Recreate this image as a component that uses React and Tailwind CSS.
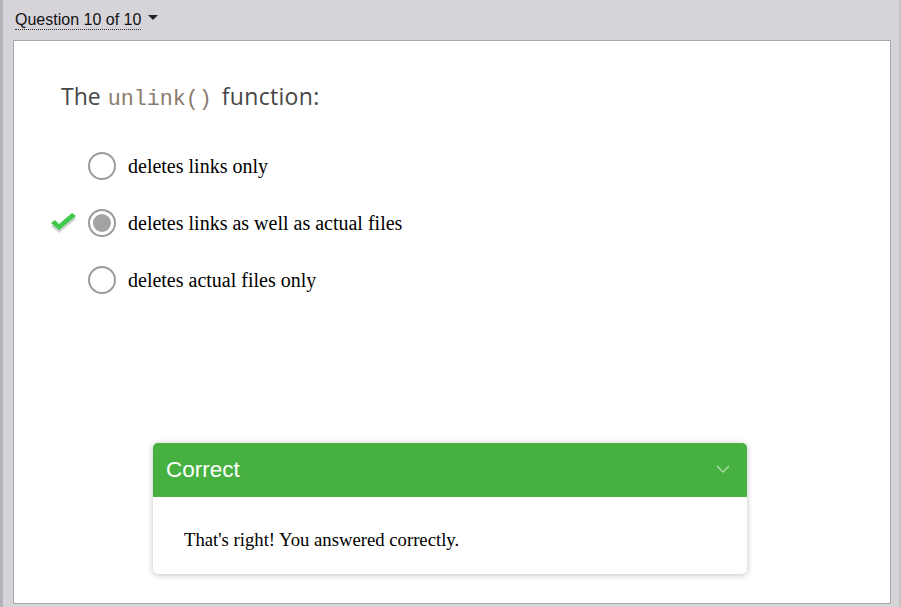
import React from "react"

const options = [
    { id: 1, text: "deletes links only", selected: false },
    { id: 2, text: "deletes links as well as actual files", selected: true },
    { id: 3, text: "deletes actual files only", selected: false },
]

const Check = () => (
    <svg width="28" height="24" viewBox="0 0 28 24">
        <path d="M1 14 L9 21 L26 7 L22 4 L9 15 L5 11 Z" fill="#d2d2d2" />
        <path d="M1 11 L9 18 L26 4 L22 1 L9 12 L5 8 Z" fill="#3fc84b" />
    </svg>
)

const Radio = ({ selected }) => (
    <div className="w-[28px] h-[28px] rounded-full border-2 border-[#9c9c9c] flex items-center justify-center bg-white">
        {selected && <div className="w-[18px] h-[18px] rounded-full bg-[#a3a3a3]" />}
    </div>
)

const App = () => {
    return (
        <div className="h-[607px] w-[901px] overflow-hidden bg-[#d6d4d9] border-l-[3px] border-l-[#b4b2b7] border-r-[2px] border-r-[#c4c2c7] flex flex-col">
            <header className="h-[40px] pl-[12px] pt-[10px]">
                <button className="flex items-center gap-[7px] text-[16px] text-[#111] font-['Liberation_Sans',Arial,sans-serif]">
                    <span className="border-b border-dotted border-[#333] leading-[19px]">Question 10 of 10</span>
                    <svg width="10" height="6" viewBox="0 0 10 6" className="mb-[4px]">
                        <path d="M0 0 L10 0 L5 5 Z" fill="#222" />
                    </svg>
                </button>
            </header>

            <main className="ml-[10px] mr-[8px] h-[564px] bg-white border border-[#a9a9ad] flex flex-col">
                <h2 className="mt-[38px] ml-[47px] text-[23px] text-[#474747] font-['Open_Sans',sans-serif] flex items-baseline">
                    <span>The</span>
                    <code className="ml-[7px] mr-[10px] text-[21.7px] text-[#8a7b6e] font-light font-['Liberation_Mono',monospace]">unlink()</code>
                    <span className="tracking-[0.3px]">function:</span>
                </h2>

                <div className="mt-[35px] flex flex-col gap-[29px]">
                    {options.map(opt => (
                        <div key={opt.id} className="flex items-center h-[28px]">
                            <div className="w-[74px] flex justify-end pr-[10px] pt-[2px]">
                                {opt.selected && <Check />}
                            </div>
                            <Radio selected={opt.selected} />
                            <span className="ml-[12px] text-[20px] text-black font-['Liberation_Serif','Times_New_Roman',serif]">
                                {opt.text}
                            </span>
                        </div>
                    ))}
                </div>

                <div className="mt-[149px] ml-[139px] w-[594px] rounded-[5px] bg-white shadow-[0_1px_6px_rgba(0,0,0,0.25)] overflow-hidden">
                    <div className="h-[54px] bg-[#46b040] flex items-center justify-between px-[13px]">
                        <span className="text-white text-[22.5px] font-['Liberation_Sans',Arial,sans-serif]">Correct</span>
                        <svg width="14" height="9" viewBox="0 0 14 9" className="mr-[4px]">
                            <path d="M1 1 L7 7 L13 1" fill="none" stroke="#a8dca4" strokeWidth="1.5" />
                        </svg>
                    </div>
                    <div className="h-[77px] pl-[31px] pt-[33px] text-[18.7px] text-black font-['Liberation_Serif','Times_New_Roman',serif] leading-[20px]">
                        That's right! You answered correctly.
                    </div>
                </div>
            </main>
        </div>
    )
}

export default App
